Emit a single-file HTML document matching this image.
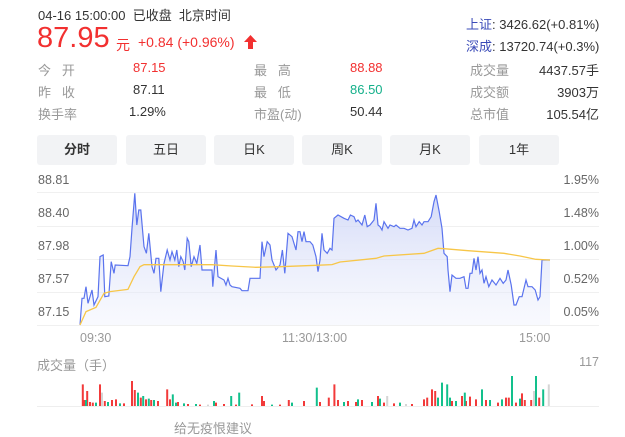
<!DOCTYPE html><html><head><meta charset="utf-8"><style>
*{margin:0;padding:0;box-sizing:border-box}
body{width:625px;height:423px;overflow:hidden;background:#fff;font-family:"Liberation Sans","Noto Sans CJK SC",sans-serif;color:#333;position:relative}
.a{position:absolute;white-space:nowrap}
.g{color:#999;font-size:13px}
.v{font-size:13px}
.r{color:#f23030}
.tab{position:absolute;top:135px;height:30px;width:80px;background:#f2f3f5;border-radius:3px;font-size:13px;text-align:center;line-height:30px;color:#333}
.gl{position:absolute;left:37px;width:562px;height:1px;background:#f0f0f0}
.yl{position:absolute;font-size:12.5px;color:#666}
</style></head><body>
<div class="a" style="left:38px;top:5px;font-size:13px;color:#333">04-16 15:00:00&nbsp; 已收盘&nbsp; 北京时间</div>
<div class="a r" style="left:37px;top:22px;font-size:29px;line-height:32px">87.95</div>
<div class="a r" style="left:116px;top:35px;font-size:14px">元</div>
<div class="a r" style="left:138px;top:34px;font-size:14px">+0.84 (+0.96%)</div>
<svg class="a" style="left:243px;top:34px" width="15" height="16" viewBox="0 0 15 16"><path d="M7.5 1L14 8H10V15H5V8H1Z" fill="#f23030"/></svg>
<div class="a v" style="left:466px;top:14px"><span style="color:#3a4bb8">上证</span>: 3426.62(+0.81%)</div>
<div class="a v" style="left:466px;top:36px"><span style="color:#3a4bb8">深成</span>: 13720.74(+0.3%)</div>
<div class="a g" style="left:38px;top:60px">今&nbsp;&nbsp; 开</div><div class="a v r" style="left:133px;top:60px">87.15</div>
<div class="a g" style="left:38px;top:82px">昨&nbsp;&nbsp; 收</div><div class="a v" style="left:133px;top:82px">87.11</div>
<div class="a g" style="left:38px;top:104px">换手率</div><div class="a v" style="left:129px;top:104px">1.29%</div>
<div class="a g" style="left:254px;top:60px">最&nbsp;&nbsp; 高</div><div class="a v r" style="left:350px;top:60px">88.88</div>
<div class="a g" style="left:254px;top:82px">最&nbsp;&nbsp; 低</div><div class="a v" style="left:350px;top:82px;color:#14b08a">86.50</div>
<div class="a g" style="left:254px;top:104px">市盈(动)</div><div class="a v" style="left:350px;top:104px">50.44</div>
<div class="a g" style="left:470px;top:60px">成交量</div><div class="a v" style="right:26px;top:60px">4437.57手</div>
<div class="a g" style="left:470px;top:82px">成交额</div><div class="a v" style="right:26px;top:82px">3903万</div>
<div class="a g" style="left:470px;top:104px">总市值</div><div class="a v" style="right:26px;top:104px">105.54亿</div>
<div class="tab" style="left:37px;font-weight:bold">分时</div>
<div class="tab" style="left:126px">五日</div>
<div class="tab" style="left:214px">日K</div>
<div class="tab" style="left:302px">周K</div>
<div class="tab" style="left:390px">月K</div>
<div class="tab" style="left:479px">1年</div>
<div class="gl" style="top:192px"></div><div class="gl" style="top:226px"></div><div class="gl" style="top:259px"></div><div class="gl" style="top:292px"></div><div class="gl" style="top:325px"></div>
<div class="yl" style="left:38px;top:173px">88.81</div><div class="yl" style="left:38px;top:206px">88.40</div><div class="yl" style="left:38px;top:239px">87.98</div><div class="yl" style="left:38px;top:272px">87.57</div><div class="yl" style="left:38px;top:305px">87.15</div>
<div class="yl" style="right:26px;top:173px">1.95%</div><div class="yl" style="right:26px;top:206px">1.48%</div><div class="yl" style="right:26px;top:239px">1.00%</div><div class="yl" style="right:26px;top:272px">0.52%</div><div class="yl" style="right:26px;top:305px">0.05%</div>
<div class="yl" style="left:80px;top:331px;color:#999">09:30</div>
<div class="yl" style="left:282px;top:331px;color:#999">11:30/13:00</div>
<div class="yl" style="left:519px;top:331px;color:#999">15:00</div>
<div class="a g" style="left:37px;top:355px">成交量（手）</div>
<div class="yl" style="right:26px;top:355px;color:#999">117</div>
<div class="a" style="left:37px;top:406px;width:562px;height:1px;background:#eee"></div>
<div class="a g" style="left:174px;top:418px">给无疫恨建议</div>
<svg class="a" style="left:0;top:170px" width="625" height="253" viewBox="0 0 1562.5 759" preserveAspectRatio="none">
<defs><linearGradient id="f" x1="0" y1="0" x2="0" y2="1"><stop offset="0" stop-color="#c9d1f5" stop-opacity=".8"/><stop offset="1" stop-color="#eef1fc" stop-opacity=".4"/></linearGradient></defs>
<path id="p" fill="url(#f)" d="M200 465L205 385L210 385L215 350L220 400L230 360L235 405L245 380L250 260L258 255L262 380L272 378L278 275L285 310L288 285L320 287L325 260L330 175L337 70L342 165L347 120L352 120L360 230L366 250L372 190L380 290L385 310L390 265L397 265L402 365L410 280L418 240L425 270L430 245L437 270L442 240L447 290L452 260L458 275L462 300L468 205L472 215L478 290L485 260L492 280L500 225L505 300L530 300L532 350L540 240L545 320L560 330L565 345L570 325L575 345L580 350L600 355L605 362L620 362L625 325L650 325L655 215L660 260L668 215L675 225L680 270L690 300L700 285L706 240L712 310L720 190L730 200L740 240L745 185L750 185L755 215L760 185L765 215L775 215L782 225L790 260L795 305L800 270L805 190L810 240L818 250L825 235L830 240L835 145L845 135L860 145L870 150L876 135L885 140L890 155L895 150L905 165L912 135L918 170L925 165L935 150L940 100L945 165L950 170L955 180L960 155L970 175L975 165L985 170L990 165L1000 175L1010 175L1020 180L1030 175L1035 150L1040 170L1048 155L1055 165L1060 155L1070 155L1078 140L1085 95L1090 75L1098 125L1105 175L1110 250L1118 260L1120 300L1125 365L1130 315L1140 325L1150 325L1160 320L1165 355L1170 355L1175 310L1180 310L1185 265L1190 300L1195 260L1200 310L1205 300L1210 340L1215 320L1222 350L1230 330L1240 345L1250 325L1258 340L1265 330L1270 300L1278 345L1285 405L1290 405L1298 380L1305 380L1310 355L1315 330L1320 350L1330 350L1338 360L1345 390L1350 380L1355 270L1375 270L1375 465Z"/>
<path fill="none" stroke="#5a73ee" stroke-width="1.2" vector-effect="non-scaling-stroke" d="M200 465L205 385L210 385L215 350L220 400L230 360L235 405L245 380L250 260L258 255L262 380L272 378L278 275L285 310L288 285L320 287L325 260L330 175L337 70L342 165L347 120L352 120L360 230L366 250L372 190L380 290L385 310L390 265L397 265L402 365L410 280L418 240L425 270L430 245L437 270L442 240L447 290L452 260L458 275L462 300L468 205L472 215L478 290L485 260L492 280L500 225L505 300L530 300L532 350L540 240L545 320L560 330L565 345L570 325L575 345L580 350L600 355L605 362L620 362L625 325L650 325L655 215L660 260L668 215L675 225L680 270L690 300L700 285L706 240L712 310L720 190L730 200L740 240L745 185L750 185L755 215L760 185L765 215L775 215L782 225L790 260L795 305L800 270L805 190L810 240L818 250L825 235L830 240L835 145L845 135L860 145L870 150L876 135L885 140L890 155L895 150L905 165L912 135L918 170L925 165L935 150L940 100L945 165L950 170L955 180L960 155L970 175L975 165L985 170L990 165L1000 175L1010 175L1020 180L1030 175L1035 150L1040 170L1048 155L1055 165L1060 155L1070 155L1078 140L1085 95L1090 75L1098 125L1105 175L1110 250L1118 260L1120 300L1125 365L1130 315L1140 325L1150 325L1160 320L1165 355L1170 355L1175 310L1180 310L1185 265L1190 300L1195 260L1200 310L1205 300L1210 340L1215 320L1222 350L1230 330L1240 345L1250 325L1258 340L1265 330L1270 300L1278 345L1285 405L1290 405L1298 380L1305 380L1310 355L1315 330L1320 350L1330 350L1338 360L1345 390L1350 380L1355 270L1375 270"/>
<path fill="none" stroke="#f7c648" stroke-width="1.3" vector-effect="non-scaling-stroke" d="M200 465L215 425L240 412L260 370L275 365L320 358L335 320L350 290L360 284L530 284L580 288L640 292L700 290L790 286L830 284L850 276L940 265L960 258L1060 250L1095 235L1110 236L1170 242L1260 250L1300 258L1340 268L1375 270"/>
<g stroke-width="5">
<path stroke="#f23a3a" d="M207 708v-65M212 708v-18M218 708v-45M225 708v-12M232 708v-10M250 708v-65M262 708v-15M280 708v-18M290 708v-20M310 708v-8M330 708v-75M337 708v-48M352 708v-25M365 708v-20M378 708v-18M395 708v-15M418 708v-50M425 708v-20M445 708v-12M470 708v-6M500 708v-4M540 708v-10M560 708v-6M590 708v-4M630 708v-5M655 708v-30M660 708v-15M700 708v-4M722 708v-18M760 708v-15M800 708v-12M822 708v-25M836 708v-65M845 708v-18M870 708v-15M890 708v-12M905 708v-18M945 708v-30M960 708v-10M985 708v-8M1030 708v-6M1060 708v-20M1068 708v-25M1080 708v-50M1088 708v-45M1130 708v-15M1155 708v-30M1165 708v-15M1175 708v-28M1190 708v-20M1215 708v-18M1245 708v-10M1265 708v-25M1272 708v-25M1290 708v-10M1305 708v-38M1312 708v-18M1328 708v-18M1348 708v-25"/>
<path stroke="#12c08c" d="M215 708v-18M240 708v-10M270 708v-12M300 708v-8M345 708v-40M358 708v-30M372 708v-22M385 708v-18M432 708v-35M440 708v-10M460 708v-8M490 708v-6M535 708v-15M578 708v-30M598 708v-40M680 708v-4M730 708v-10M792 708v-55M860 708v-12M895 708v-20M930 708v-12M950 708v-22M1000 708v-10M1095 708v-25M1105 708v-70M1118 708v-65M1125 708v-25M1140 708v-15M1162 708v-40M1205 708v-50M1225 708v-18M1255 708v-20M1280 708v-90M1300 708v-22M1340 708v-90M1358 708v-50"/>
<path stroke="#d5d5d5" d="M255 708v-40M968 708v-30M1335 708v-45M1372 708v-65M520 708v-4M1015 708v-6"/>
</g>
</svg>
</body></html>
